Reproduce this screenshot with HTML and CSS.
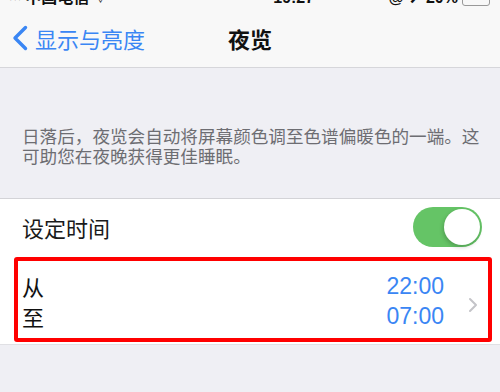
FILE: index.html
```html
<!DOCTYPE html>
<html lang="zh-CN">
<head>
<meta charset="utf-8">
<link rel="stylesheet" href="styles.css">
</head>
<body>
<div class="screen">
  <div class="status">
    <div class="st-left"><span class="dots">●●●</span><span>中国电信</span><span class="wifi">⌔</span></div>
    <div class="st-time">19:27</div>
    <div class="st-right"><span>@ ➚ 20%</span><span class="batt"></span></div>
  </div>
  <div class="nav">
    <div class="back">
      <svg class="chev" width="18" height="26" viewBox="0 0 18 26"><polyline points="14.5,2.5 4,13 14.5,23.5" fill="none" stroke="#3a86f4" stroke-width="3.4" stroke-linecap="round" stroke-linejoin="round"/></svg>
      <span>显示与亮度</span>
    </div>
    <div class="title">夜览</div>
    <div></div>
  </div>
  <div class="desc">日落后，夜览会自动将屏幕颜色调至色谱偏暖色的一端。这可助您在夜晚获得更佳睡眠。</div>
  <div class="group">
    <div class="row">
      <span class="label">设定时间</span>
      <span class="toggle"><span class="knob"></span></span>
    </div>
    <div class="highlight">
      <div class="labels"><span>从</span><span>至</span></div>
      <div class="times"><span>22:00</span><span>07:00</span></div>
      <svg class="disc" width="10" height="16" viewBox="0 0 10 16"><polyline points="2,2 8,8 2,14" fill="none" stroke="#c4c4c8" stroke-width="2" stroke-linecap="round" stroke-linejoin="round"/></svg>
    </div>
  </div>
</div>
</body>
</html>
```

FILE: styles.css
```css
* { box-sizing: border-box; }
html, body { margin: 0; padding: 0; }
body {
  width: 500px;
  height: 392px;
  overflow: hidden;
  background: #efeff4;
  font-family: "Liberation Sans", "Noto Sans CJK SC", sans-serif;
}
.screen { display: flex; flex-direction: column; height: 392px; }
.status {
  height: 6px;
  overflow: hidden;
  background: #f8f8f8;
  display: flex;
  align-items: flex-end;
  justify-content: space-between;
  padding: 0 10px 0 8px;
  font-size: 16px;
  line-height: 16px;
  font-weight: bold;
  color: #111;
}
.st-left { display: flex; gap: 4px; align-items: flex-end; width: 150px; }
.dots { font-size: 9px; letter-spacing: -1px; }
.st-time { width: 60px; margin-left: 60px; }
.st-right { display: flex; gap: 4px; align-items: flex-end; }
.batt { width: 28px; height: 14px; border: 1.5px solid #999; border-radius: 3px; }
.nav {
  height: 62px;
  background: #f8f8f8;
  border-bottom: 1px solid #d6d6da;
  display: grid;
  grid-template-columns: 1fr auto 1fr;
  align-items: center;
  padding-top: 3px;
}
.back {
  display: flex;
  align-items: center;
  gap: 6px;
  padding-left: 11px;
  color: #3a86f4;
  font-size: 22px;
  font-family: "Noto Sans CJK SC", sans-serif;
}
.title {
  font-size: 22px;
  font-weight: bold;
  color: #111;
  font-family: "Noto Sans CJK SC", sans-serif;
}
.desc {
  padding: 58px 16px 32px 22px;
  font-size: 17.6px;
  line-height: 20px;
  color: #6d6d72;
  font-family: "Noto Sans CJK SC", sans-serif;
  border-bottom: 1px solid #d3d3d7;
}
.group {
  background: #fff;
  padding-bottom: 2px;
  border-bottom: 1px solid #e0e0e4;
}
.row {
  height: 58px;
  display: flex;
  align-items: center;
  justify-content: space-between;
  padding: 0 18px 2px 22px;
}
.label {
  font-size: 22px;
  color: #1a1a1a;
  font-family: "Noto Sans CJK SC", sans-serif;
}
.toggle {
  width: 69px;
  height: 40px;
  border-radius: 20px;
  background: #65c466;
  display: flex;
  justify-content: flex-end;
  padding: 2px;
}
.knob {
  width: 36px;
  height: 36px;
  border-radius: 50%;
  background: #fff;
  box-shadow: -1px 2px 4px rgba(0,0,0,0.2);
}
.highlight {
  margin: 0 8px 0 14px;
  height: 85px;
  border: 4px solid #ff0000;
  border-radius: 3px;
  display: flex;
  align-items: center;
  padding: 2px 10px 0 4px;
}
.labels {
  display: flex;
  flex-direction: column;
  font-size: 22px;
  line-height: 30px;
  color: #111;
  font-family: "Noto Sans CJK SC", sans-serif;
  flex: 1;
}
.times {
  display: flex;
  flex-direction: column;
  align-items: flex-end;
  font-size: 23px;
  line-height: 30px;
  color: #3a86f4;
  margin-right: 24px;
}
.disc { margin-top: 8px; }
```
